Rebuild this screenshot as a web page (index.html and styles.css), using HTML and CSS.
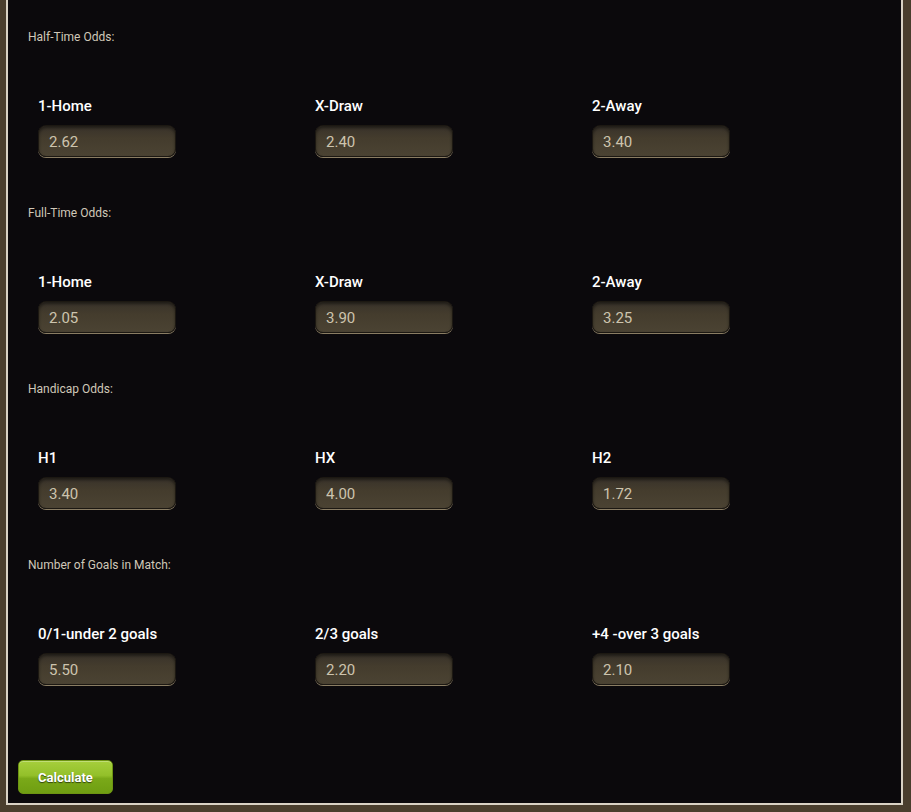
FILE: index.html
```html
<!DOCTYPE html>
<html lang="en">
<head>
    <meta charset="UTF-8">
    <meta name="viewport" content="width=device-width, initial-scale=1.0">
    <title>Odds Calculator</title>
    <link rel="stylesheet" href="styles.css">
</head>
<body>
    <div class="panel">
        <!-- Half-time -->
        <div class="group">
            <div class="group-title">Half-Time Odds:</div>
            <div class="fields">
                <div class="field">
                    <label for="ht1">1-Home</label>
                    <input type="text" id="ht1" value="2.62">
                </div>
                <div class="field">
                    <label for="htx">X-Draw</label>
                    <input type="text" id="htx" value="2.40">
                </div>
                <div class="field">
                    <label for="ht2">2-Away</label>
                    <input type="text" id="ht2" value="3.40">
                </div>
            </div>
        </div>

        <!-- Full-time -->
        <div class="group">
            <div class="group-title">Full-Time Odds:</div>
            <div class="fields">
                <div class="field">
                    <label for="ft1">1-Home</label>
                    <input type="text" id="ft1" value="2.05">
                </div>
                <div class="field">
                    <label for="ftx">X-Draw</label>
                    <input type="text" id="ftx" value="3.90">
                </div>
                <div class="field">
                    <label for="ft2">2-Away</label>
                    <input type="text" id="ft2" value="3.25">
                </div>
            </div>
        </div>

        <!-- Handicap -->
        <div class="group">
            <div class="group-title">Handicap Odds:</div>
            <div class="fields">
                <div class="field">
                    <label for="h1">H1</label>
                    <input type="text" id="h1" value="3.40">
                </div>
                <div class="field">
                    <label for="hx">HX</label>
                    <input type="text" id="hx" value="4.00">
                </div>
                <div class="field">
                    <label for="h2">H2</label>
                    <input type="text" id="h2" value="1.72">
                </div>
            </div>
        </div>

        <!-- Goals -->
        <div class="group">
            <div class="group-title">Number of Goals in Match:</div>
            <div class="fields">
                <div class="field">
                    <label for="g1">0/1-under 2 goals</label>
                    <input type="text" id="g1" value="5.50">
                </div>
                <div class="field">
                    <label for="g2">2/3 goals</label>
                    <input type="text" id="g2" value="2.20">
                </div>
                <div class="field">
                    <label for="g3">+4 -over 3 goals</label>
                    <input type="text" id="g3" value="2.10">
                </div>
            </div>
        </div>

        <button class="btn-calc">Calculate</button>
    </div>
</body>
</html>
```

FILE: styles.css
```css
body {
    font-family: Roboto, "Liberation Sans", Arial, sans-serif;
    margin: 0;
    padding: 0;
    background-color: #4a3e2d;
}
.panel {
    margin: 0 8px 7px 6px;
    padding: 29px 0 9px 10px;
    background-color: #0b090c;
    border: 2px solid #d9d2c4;
    border-top: none;
}
.group {
    margin-bottom: 48px;
}
.group-title {
    margin: 0 0 51px 10px;
    font-size: 12px;
    line-height: 16px;
    color: #d0c8b8;
}
.fields {
    display: grid;
    grid-template-columns: 277px 277px 277px;
    margin-left: 20px;
}
.field {
    display: flex;
    flex-direction: column;
    gap: 9px;
}
label {
    font-size: 15px;
    line-height: 20px;
    font-weight: 500;
    color: #ffffff;
}
input {
    box-sizing: border-box;
    width: 138px;
    height: 32px;
    padding: 1px 10px 0;
    border: 1px solid #1c1812;
    border-radius: 8px;
    background: linear-gradient(to bottom, #38322a 0%, #443c2d 40%, #4b4333 100%);
    box-shadow: inset 0 2px 3px rgba(0, 0, 0, 0.45), 0 1px 0 #8a7d63;
    font-family: Roboto, "Liberation Sans", Arial, sans-serif;
    font-size: 15px;
    color: #cdc4ae;
    outline: none;
}
.btn-calc {
    display: block;
    margin-top: 75px;
    width: 95px;
    height: 34px;
    border: 1px solid #6d9412;
    border-radius: 5px;
    background: linear-gradient(to bottom, #a6cf3c 0%, #93c02a 45%, #7aa918 55%, #6f9e12 100%);
    box-shadow: inset 0 1px 0 rgba(255, 255, 255, 0.3);
    font-family: Roboto, "Liberation Sans", Arial, sans-serif;
    font-size: 13px;
    font-weight: bold;
    color: #ffffff;
    text-shadow: 0 1px 1px rgba(0, 0, 0, 0.6);
    cursor: pointer;
}
.btn-calc:hover {
    background: linear-gradient(to bottom, #b0d84a 0%, #7aa918 100%);
}
```
